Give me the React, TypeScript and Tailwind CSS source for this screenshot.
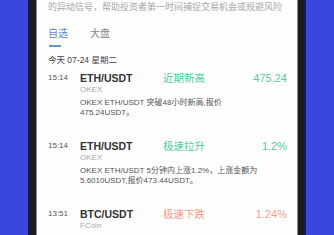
import React from 'react';

interface Alert {
    time: string;
    pair: string;
    source: string;
    tag: string;
    value: string;
    up: boolean;
    lines: string[];
}

const alerts: Alert[] = [
    {
        time: '15:14',
        pair: 'ETH/USDT',
        source: 'OKEX',
        tag: '近期新高',
        value: '475.24',
        up: true,
        lines: ['OKEX ETH/USDT 突破48小时新高,报价', '475.24USDT。'],
    },
    {
        time: '15:14',
        pair: 'ETH/USDT',
        source: 'OKEX',
        tag: '极速拉升',
        value: '1.2%',
        up: true,
        lines: ['OKEX ETH/USDT 5分钟内上涨1.2%，上涨金额为', '5.6010USDT,报价473.44USDT。'],
    },
    {
        time: '13:51',
        pair: 'BTC/USDT',
        source: 'FCoin',
        tag: '极速下跌',
        value: '1.24%',
        up: false,
        lines: [],
    },
];

const AlertRow: React.FC<{ item: Alert }> = ({ item }) => (
    <div className="flex mb-[22px]">
        <div className="w-[32px] shrink-0 h-[12px] leading-[12px] text-[8px] text-[#555]">{item.time}</div>
        <div className="flex-1 min-w-0">
            <div className="flex h-[12px] items-center">
                <div className="w-[83px] shrink-0 text-[10.5px] font-bold text-[#333] leading-[12px]">{item.pair}</div>
                <div className={`flex-1 text-[10.5px] leading-[12px] ${item.up ? 'text-[#4fcb9f]' : 'text-[#f19c84]'}`}>
                    {item.tag}
                </div>
                <div className={`text-[11px] leading-[12px] ${item.up ? 'text-[#5ac8a6]' : 'text-[#efa48c]'}`}>
                    {item.value}
                </div>
            </div>
            <div className="h-[12px] leading-[12px] text-[8px] text-[#aaa]">{item.source}</div>
            {item.lines.length > 0 && (
                <div className="mt-[2px] text-[8px] leading-[10px] text-[#555] whitespace-nowrap">
                    {item.lines.map((l, i) => (
                        <div key={i}>{l}</div>
                    ))}
                </div>
            )}
        </div>
    </div>
);

export default function App() {
    return (
        <div
            className="w-[334px] h-[235px] overflow-hidden bg-[#3947de] pl-[28px]"
            style={{ fontFamily: '"Liberation Sans", "Noto Sans CJK SC", sans-serif' }}
        >
            <div className="w-[278px] h-full bg-[#1c1c1e] border-x-2 border-[#161b4c] px-[6px]">
                <div className="h-full bg-[#fdfdfd] border-x border-[#8c8c8c] pl-[11px] pr-[10px] overflow-hidden">
                    <div className="h-[14px] leading-[14px] text-[9px] text-[#a8a8a8] whitespace-nowrap">
                        的异动信号，帮助投资者第一时间捕捉交易机会或规避风险
                    </div>

                    <div className="mt-[13px] flex gap-[22px] h-[14px] leading-[14px] text-[10px]">
                        <span className="text-[#5a8ccc]">自选</span>
                        <span className="text-[#888]">大盘</span>
                    </div>
                    <div className="mt-[4px] ml-[1px] w-[12px] h-[1.5px] bg-[#6b95cc]" />

                    <div className="mt-[7px] h-[12px] leading-[12px] text-[8.5px] text-[#444]">今天 07-24 星期二</div>

                    <div className="mt-[6px]">
                        {alerts.map((a, i) => (
                            <AlertRow key={i} item={a} />
                        ))}
                    </div>
                </div>
            </div>
        </div>
    );
}
